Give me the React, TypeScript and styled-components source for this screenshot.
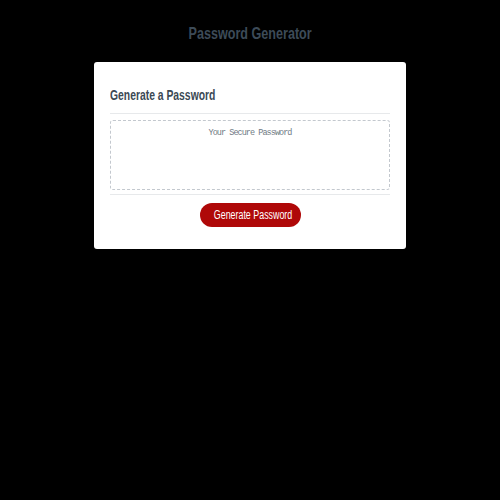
import React from "react";
import styled, { createGlobalStyle } from "styled-components";

const Global = createGlobalStyle`
  html, body { margin: 0; padding: 0; background: #000; }
  body { font-family: "Liberation Sans", Arial, sans-serif; }
`;

const Page = styled.div`
  width: 500px;
  height: 500px;
  background: #000;
  display: flex;
  flex-direction: column;
  align-items: center;
`;

const Narrow = styled.span<{ $origin?: string; $scale?: number }>`
  display: inline-block;
  white-space: nowrap;
  transform: scaleX(${(p) => p.$scale ?? 0.74});
  transform-origin: ${(p) => p.$origin ?? "center"};
`;

const Title = styled.h1`
  margin: 24px 0 0;
  height: 38px;
  font-size: 17px;
  line-height: 19px;
  font-weight: 700;
  color: #3d4b58;
  text-align: center;
`;

const Card = styled.div`
  width: 312px;
  box-sizing: border-box;
  background: #fff;
  border-radius: 3px;
  padding: 0 16px 22px;
`;

const CardHeader = styled.div`
  padding-top: 25px;
  padding-bottom: 10px;
  border-bottom: 1px solid #e7e9eb;
`;

const CardTitle = styled.h2`
  margin: 0;
  font-size: 14px;
  line-height: 16px;
  font-weight: 700;
  color: #3b4954;
`;

const CardBody = styled.div`
  padding: 6px 0 4px;
  border-bottom: 1px solid #e7e9eb;
`;

const PasswordBox = styled.textarea`
  display: block;
  width: 100%;
  height: 70px;
  box-sizing: border-box;
  border: 1px dashed #c3c8ce;
  border-radius: 3px;
  resize: none;
  padding: 7px 6px;
  font-family: "Liberation Mono", "DejaVu Sans Mono", monospace;
  font-size: 8.5px;
  letter-spacing: -0.95px;
  text-align: center;
  outline: none;
  &::placeholder { color: #6f7a84; }
`;

const CardFooter = styled.div`
  display: flex;
  justify-content: center;
  padding-top: 8px;
`;

const Button = styled.button`
  height: 24px;
  width: 101px;
  border: none;
  border-radius: 12px;
  background: #af0808;
  color: #fff;
  font-family: inherit;
  font-size: 12px;
  padding: 0;
  cursor: pointer;
`;

export default function App() {
  return (
    <>
      <Global />
      <Page>
        <Title>
          <Narrow>Password Generator</Narrow>
        </Title>
        <Card>
          <CardHeader>
            <CardTitle>
              <Narrow $origin="left">Generate a Password</Narrow>
            </CardTitle>
          </CardHeader>
          <CardBody>
            <PasswordBox readOnly placeholder="Your Secure Password" aria-label="Generated Password" />
          </CardBody>
          <CardFooter>
            <Button>
              <Narrow $scale={0.74}>Generate Password</Narrow>
            </Button>
          </CardFooter>
        </Card>
      </Page>
    </>
  );
}
